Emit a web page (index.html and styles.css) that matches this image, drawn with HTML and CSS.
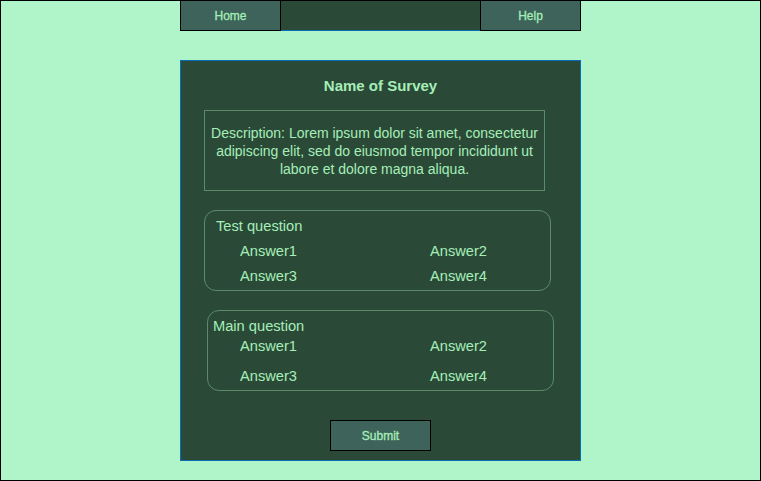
FILE: index.html
```html
<!DOCTYPE html>
<html>
<head>
<meta charset="utf-8">
<link rel="stylesheet" href="styles.css">
</head>
<body>
<div class="frame">
  <nav class="nav">
    <a class="nav-btn">Home</a>
    <div class="nav-fill"></div>
    <a class="nav-btn">Help</a>
  </nav>
  <main class="panel">
    <h1 class="title">Name of Survey</h1>
    <div class="desc">Description: Lorem ipsum dolor sit amet, consectetur adipiscing elit, sed do eiusmod tempor incididunt ut labore et dolore magna aliqua.</div>
    <section class="q q1">
      <div class="q-title">Test question</div>
      <div class="answers">
        <span>Answer1</span><span>Answer2</span>
        <span>Answer3</span><span>Answer4</span>
      </div>
    </section>
    <section class="q q2">
      <div class="q-title">Main question</div>
      <div class="answers">
        <span>Answer1</span><span>Answer2</span>
        <span>Answer3</span><span>Answer4</span>
      </div>
    </section>
    <button class="submit">Submit</button>
  </main>
</div>
</body>
</html>
```
FILE: styles.css
```css
html, body {
  margin: 0;
  padding: 0;
}
body {
  font-family: "Liberation Sans", Arial, sans-serif;
}
.frame {
  width: 761px;
  height: 481px;
  box-sizing: border-box;
  border: 1px solid #000;
  background: #b0f5c9;
  overflow: hidden;
}
.nav {
  width: 401px;
  height: 31px;
  margin: -1px auto 0;
  display: flex;
}
.nav-btn {
  width: 101px;
  height: 31px;
  box-sizing: border-box;
  border: 1px solid #000;
  background: #3d635a;
  color: #a6eeb8;
  font-size: 12px;
  -webkit-text-stroke: 0.3px #a6eeb8;
  display: flex;
  align-items: center;
  justify-content: center;
}
.nav-fill {
  flex: 1;
  height: 31px;
  box-sizing: border-box;
  background: #2a4a37;
  border-top: 1px solid #0a6db3;
  border-bottom: 1px solid #0a6db3;
}
.panel {
  width: 401px;
  height: 401px;
  box-sizing: border-box;
  margin: 29px auto 0;
  background: #2a4a37;
  border: 1px solid #0a6db3;
  display: flex;
  flex-direction: column;
  align-items: flex-start;
  color: #a6eeb8;
}
.title {
  margin: 16px 0 0;
  align-self: stretch;
  text-align: center;
  font-size: 15px;
  line-height: 18px;
  font-weight: bold;
}
.desc {
  margin: 15px 0 0 23px;
  width: 341px;
  box-sizing: border-box;
  border: 1px solid #5b8a6b;
  padding: 13px 0 12px;
  text-align: center;
  font-size: 14px;
  line-height: 18px;
}
.q {
  width: 347px;
  box-sizing: border-box;
  border: 1px solid #5b8a6b;
  border-radius: 12px;
  font-size: 14.67px;
  line-height: 18px;
}
.q1 {
  margin: 19px 0 0 23px;
  padding: 6px 0 5px 11px;
}
.q2 {
  margin: 19px 0 0 26px;
  padding: 6px 0 5px 5px;
}
.answers {
  display: grid;
  grid-template-columns: 190px 120px;
}
.q1 .answers {
  margin: 7px 0 0 24px;
  row-gap: 7px;
}
.q2 .answers {
  margin: 2px 0 0 27px;
  row-gap: 12px;
}
.submit {
  margin: 29px 0 0 149px;
  width: 101px;
  height: 31px;
  box-sizing: border-box;
  border: 1px solid #000;
  background: #3d635a;
  color: #a6eeb8;
  -webkit-text-stroke: 0.3px #a6eeb8;
  font-family: "Liberation Sans", Arial, sans-serif;
  font-size: 12px;
  padding: 0;
}
```
